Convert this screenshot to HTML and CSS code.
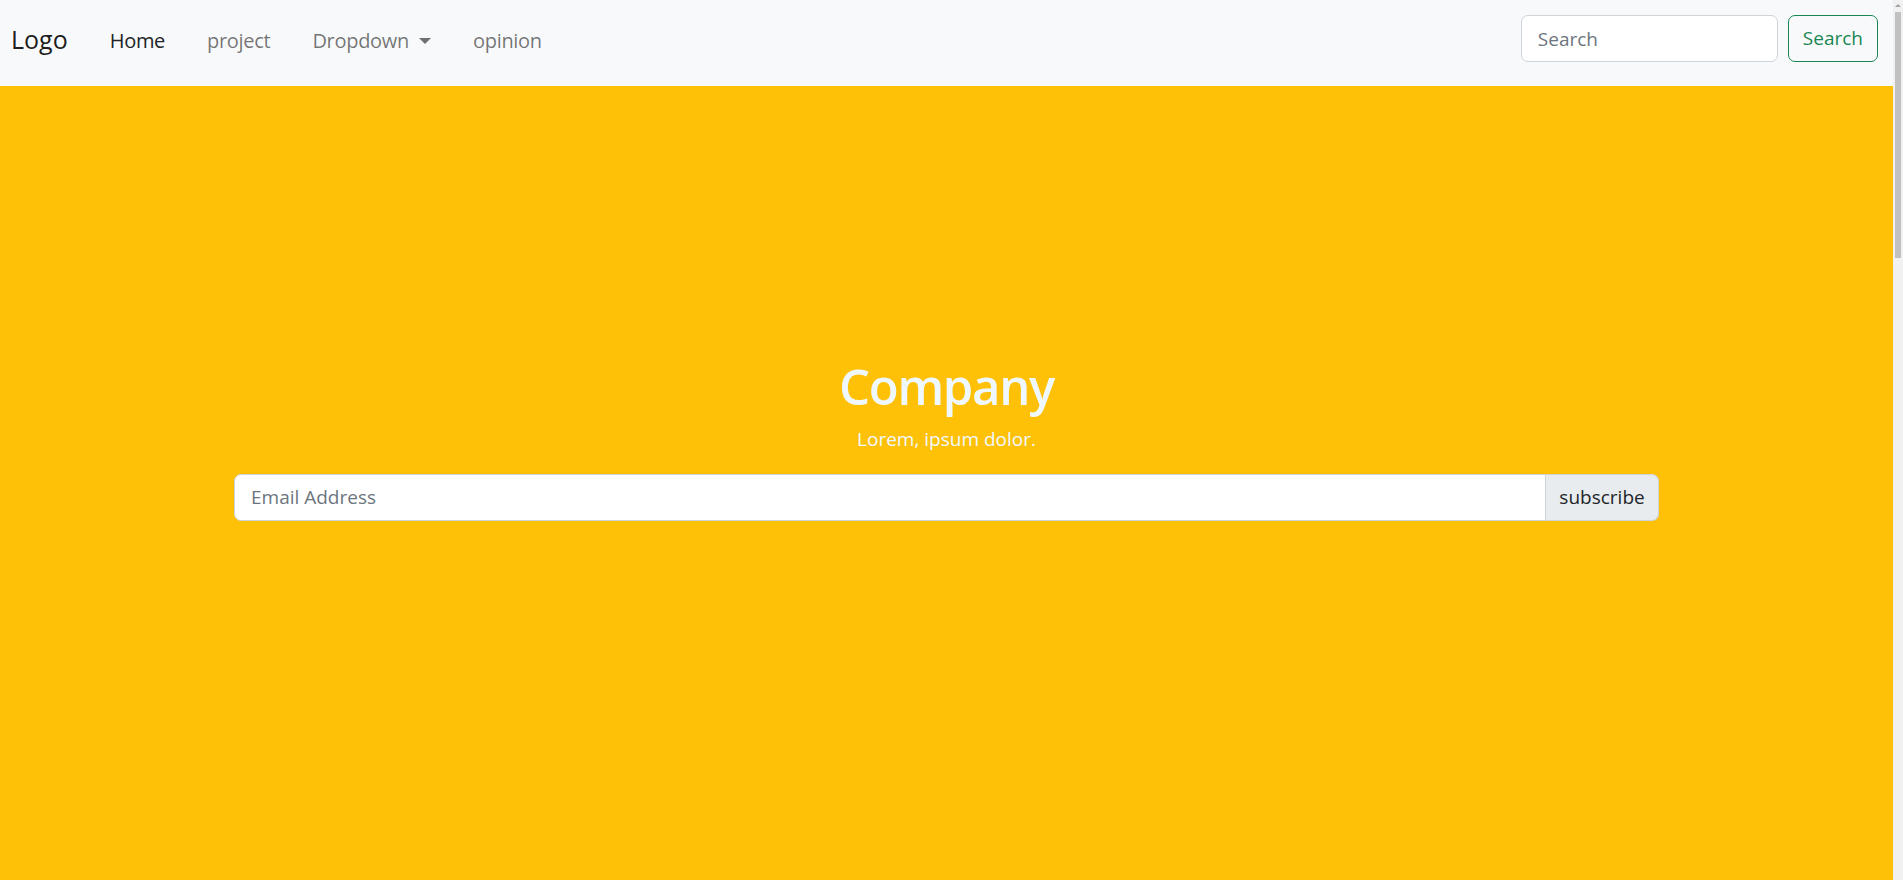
FILE: index.html
```html
<!DOCTYPE html>
<html lang="en">
<head>
<meta charset="utf-8">
<title>Company</title>
<link rel="stylesheet" href="styles.css">
</head>
<body>
<div class="page">
  <nav class="navbar">
    <a class="brand" href="#">Logo</a>
    <ul class="nav-links">
      <li><a class="nav-link active" href="#">Home</a></li>
      <li><a class="nav-link" href="#">project</a></li>
      <li><a class="nav-link dropdown" href="#">Dropdown<span class="caret"></span></a></li>
      <li><a class="nav-link" href="#">opinion</a></li>
    </ul>
    <form class="search-form">
      <input class="search-input" type="search" placeholder="Search">
      <button class="search-btn" type="button">Search</button>
    </form>
  </nav>

  <section class="hero">
    <div class="hero-inner">
      <h1 class="hero-title">Company</h1>
      <p class="hero-text">Lorem, ipsum dolor.</p>
      <div class="input-group">
        <input class="email-input" type="email" placeholder="Email Address">
        <span class="input-addon">subscribe</span>
      </div>
    </div>
  </section>
</div>
<div class="scrollbar" aria-hidden="true">
  <div class="scroll-arrow"></div>
  <div class="scroll-thumb"></div>
</div>
</body>
</html>
```

FILE: styles.css
```css
* {
  box-sizing: border-box;
}

html,
body {
  height: 100%;
}

body {
  margin: 0;
  overflow: hidden;
  font-family: "Open Sans", "Noto Sans", "Liberation Sans", sans-serif;
  font-size: 20px;
  line-height: 1.5;
  color: #212529;
  background: #f1f1f1;
}

.page {
  display: flex;
  flex-direction: column;
  height: 100%;
  margin-right: 10px;
}

.navbar {
  display: flex;
  align-items: center;
  flex: 0 0 86px;
  padding: 15px 15px 24px 11px;
  background: #f8f9fa;
}

.brand {
  padding-top: 2px;
  font-size: 25px;
  line-height: 1.5;
  color: rgba(0, 0, 0, 0.9);
  text-decoration: none;
  margin-right: 21px;
}

.nav-links {
  display: flex;
  list-style: none;
  margin: 0;
  padding: 5px 0 0;
  flex: 1;
}

.nav-link {
  display: block;
  padding: 0 21px;
  color: rgba(0, 0, 0, 0.55);
  text-decoration: none;
  font-size: 20px;
  letter-spacing: -0.3px;
}

.nav-link.active {
  color: #212529;
}

.caret {
  display: inline-block;
  margin-left: 10px;
  vertical-align: 4px;
  border-top: 6px solid;
  border-left: 6px solid transparent;
  border-right: 6px solid transparent;
}

.search-form {
  display: flex;
  gap: 10px;
}

.search-input {
  width: 257px;
  height: 47px;
  padding: 7.5px 16px;
  font: inherit;
  font-size: 19px;
  color: #212529;
  background: #fff;
  border: 1px solid #ced4da;
  border-radius: 7px;
  outline: none;
}

.search-input::placeholder,
.email-input::placeholder {
  color: #6c757d;
}

.search-btn {
  height: 47px;
  padding: 0 14px;
  font: inherit;
  font-size: 19px;
  color: #198754;
  background: transparent;
  border: 1px solid #198754;
  border-radius: 7px;
}

.hero {
  flex: 1;
  background: #ffc107;
  padding-top: 270px;
}

.hero-inner {
  width: 1425px;
  margin: 0 auto;
  text-align: center;
}

.hero-title {
  margin: 0 0 8px;
  font-size: 49px;
  font-weight: 600;
  line-height: 60px;
  color: #f0f8ff;
  letter-spacing: -1.3px;
}

.hero-text {
  margin: 0 0 20px;
  font-size: 19px;
  line-height: 30px;
  color: #f0f8ff;
}

.input-group {
  display: flex;
  height: 47px;
}

.email-input {
  flex: 1;
  min-width: 0;
  padding: 7.5px 16px;
  font: inherit;
  font-size: 19px;
  color: #212529;
  background: #fff;
  border: 1px solid #ced4da;
  border-radius: 7px 0 0 7px;
  outline: none;
}

.input-addon {
  display: flex;
  align-items: center;
  width: 113px;
  justify-content: center;
  font-size: 19px;
  color: #212529;
  background: #e9ecef;
  border: 1px solid #ced4da;
  border-left: 0;
  border-radius: 0 7px 7px 0;
}

.scrollbar {
  position: fixed;
  top: 0;
  right: 0;
  bottom: 0;
  width: 10px;
  background: #f1f1f1;
}

.scroll-arrow {
  width: 0;
  height: 0;
  margin: 4px auto 0;
  border-bottom: 3px solid #a3a3a3;
  border-left: 3px solid transparent;
  border-right: 3px solid transparent;
}

.scroll-thumb {
  position: absolute;
  top: 12px;
  left: 2px;
  width: 6px;
  height: 246px;
  background: #c1c1c1;
}
```
